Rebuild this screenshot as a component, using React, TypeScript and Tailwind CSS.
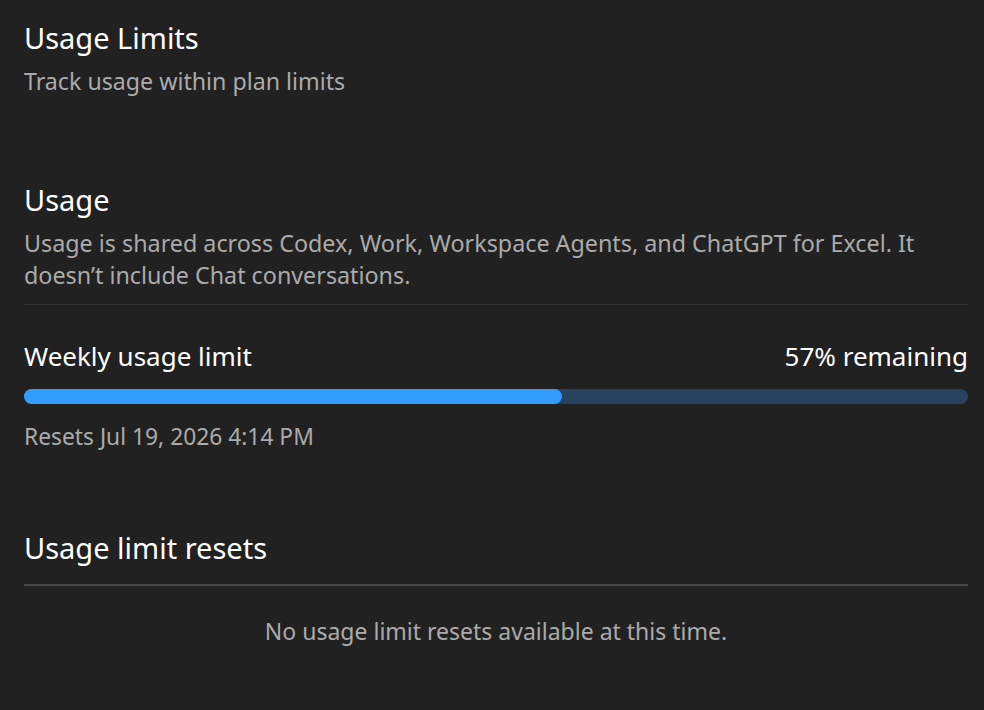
export default function App() {
  const remaining = 57;

  return (
    <div
      className="min-h-[710px] w-full bg-[#212121] pl-6 pr-4 pt-[18px] text-white"
      style={{ fontFamily: '"Noto Sans", "Open Sans", sans-serif' }}
    >
      {/* Page header */}
      <div>
        <h1 className="text-[29px] leading-[40px] font-normal">Usage Limits</h1>
        <p className="mt-[7px] text-[23.2px] leading-[32px] text-[#ababab]">Track usage within plan limits</p>
      </div>

      {/* Usage */}
      <div className="mt-[83px]">
        <h2 className="text-[29px] leading-[40px] font-normal">Usage</h2>
        <p className="mt-[7px] text-[23.3px] leading-[32px] text-[#ababab]">
          Usage is shared across Codex, Work, Workspace Agents, and ChatGPT for Excel. It doesn’t include Chat
          conversations.
        </p>
        <div className="mt-[13px] h-px bg-[#303030]" />

        <div className="mt-[35px] flex items-center justify-between text-[26px] leading-[32px]">
          <span>Weekly usage limit</span>
          <span>{remaining}% remaining</span>
        </div>
        <div className="mt-[17px] h-[15px] w-full rounded-full bg-[#27435f]">
          <div className="h-full rounded-full bg-[#339cff]" style={{ width: `${remaining}%` }} />
        </div>
        <p className="mt-[17px] text-[22.8px] leading-[32px] text-[#ababab]">Resets Jul 19, 2026 4:14 PM</p>
      </div>

      {/* Usage limit resets */}
      <div className="mt-[75px]">
        <h2 className="text-[29px] leading-[40px] font-normal">Usage limit resets</h2>
        <div className="mt-[16px] h-[2px] bg-[#474747]" />
        <p className="mt-[29px] text-center text-[23px] leading-[32px] text-[#ababab]">
          No usage limit resets available at this time.
        </p>
      </div>
    </div>
  );
}
